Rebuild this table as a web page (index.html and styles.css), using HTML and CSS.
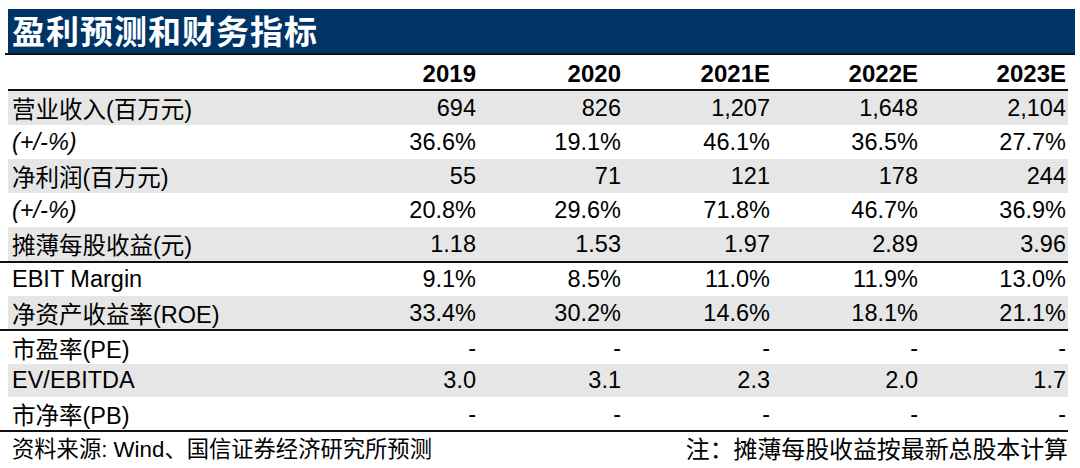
FILE: index.html
```html
<!DOCTYPE html>
<html lang="zh">
<head>
<meta charset="utf-8">
<title>盈利预测和财务指标</title>
<link rel="stylesheet" href="styles.css">
</head>
<body>
<div class="sheet">
  <div class="title-wrap"><div class="title-bar">盈利预测和财务指标</div></div>
  <div class="row head">
    <div class="label"></div><div>2019</div><div>2020</div><div>2021E</div><div>2022E</div><div>2023E</div>
  </div>
  <div class="group g1">
    <div class="row gray"><div class="label">营业收入(百万元)</div><div>694</div><div>826</div><div>1,207</div><div>1,648</div><div>2,104</div></div>
    <div class="row"><div class="label ital">(+/-%)</div><div>36.6%</div><div>19.1%</div><div>46.1%</div><div>36.5%</div><div>27.7%</div></div>
    <div class="row gray"><div class="label">净利润(百万元)</div><div>55</div><div>71</div><div>121</div><div>178</div><div>244</div></div>
    <div class="row"><div class="label ital">(+/-%)</div><div>20.8%</div><div>29.6%</div><div>71.8%</div><div>46.7%</div><div>36.9%</div></div>
    <div class="row gray"><div class="label">摊薄每股收益(元)</div><div>1.18</div><div>1.53</div><div>1.97</div><div>2.89</div><div>3.96</div></div>
  </div>
  <div class="group g2">
    <div class="row"><div class="label">EBIT Margin</div><div>9.1%</div><div>8.5%</div><div>11.0%</div><div>11.9%</div><div>13.0%</div></div>
    <div class="row gray"><div class="label">净资产收益率(ROE)</div><div>33.4%</div><div>30.2%</div><div>14.6%</div><div>18.1%</div><div>21.1%</div></div>
  </div>
  <div class="group g3">
    <div class="row"><div class="label">市盈率(PE)</div><div>-</div><div>-</div><div>-</div><div>-</div><div>-</div></div>
    <div class="row gray"><div class="label">EV/EBITDA</div><div>3.0</div><div>3.1</div><div>2.3</div><div>2.0</div><div>1.7</div></div>
    <div class="row"><div class="label">市净率(PB)</div><div>-</div><div>-</div><div>-</div><div>-</div><div>-</div></div>
  </div>
  <div class="footer">
    <div class="src">资料来源: Wind、国信证券经济研究所预测</div>
    <div class="note">注：摊薄每股收益按最新总股本计算</div>
  </div>
</div>
</body>
</html>
```

FILE: styles.css
```css
* { box-sizing: border-box; }
html, body { margin: 0; padding: 0; background: #fff; }
body {
  width: 1080px;
  height: 468px;
  overflow: hidden;
  font-family: "Liberation Sans", Arial, "Noto Sans CJK SC", sans-serif;
  color: #000;
}
.sheet {
  padding-top: 9px;
}
.title-wrap {
  margin-left: 5px;
  width: 1070px;
  border-bottom: 2px solid #111;
}
.title-bar {
  margin-left: 3px;
  height: 44px;
  background: #003366;
  color: #fff;
  font-family: "Noto Sans CJK SC", sans-serif;
  font-weight: 700;
  font-size: 33px;
  line-height: 42px;
  padding-left: 4px;
  letter-spacing: 1px;
}
.row {
  display: grid;
  grid-template-columns: 320px 148px 145px 149px 148px 148px;
  align-items: center;
  height: 34px;
  font-size: 23.5px;
  margin-left: 8px;
  width: 1060px;
}
.row > div { text-align: right; white-space: nowrap; }
.row > div.label {
  text-align: left;
  padding-left: 4px;
  font-family: "Liberation Sans", "Noto Sans CJK SC", sans-serif;
}
.label.ital { font-style: italic; }
.row.gray { background: #e6e6e6; }
.head {
  height: 36px;
  font-weight: 700;
  font-size: 24px;
  border-bottom: 2px solid #111;
  padding-top: 3px;
}
.group {
  margin-left: 0;
  width: 1068px;
  border-bottom: 2px solid #111;
}
.group .row { margin-left: 8px; }
.g2 .row { height: 33px; }
.g3 .row { height: 33px; }
.footer {
  display: flex;
  justify-content: space-between;
  align-items: center;
  padding: 0 12px 0 12px;
  width: 1080px;
  height: 30px;
  font-family: "Liberation Sans", "Noto Sans CJK SC", sans-serif;
}
.footer .src { font-size: 22.3px; }
.footer .note { font-size: 23.9px; }
```
